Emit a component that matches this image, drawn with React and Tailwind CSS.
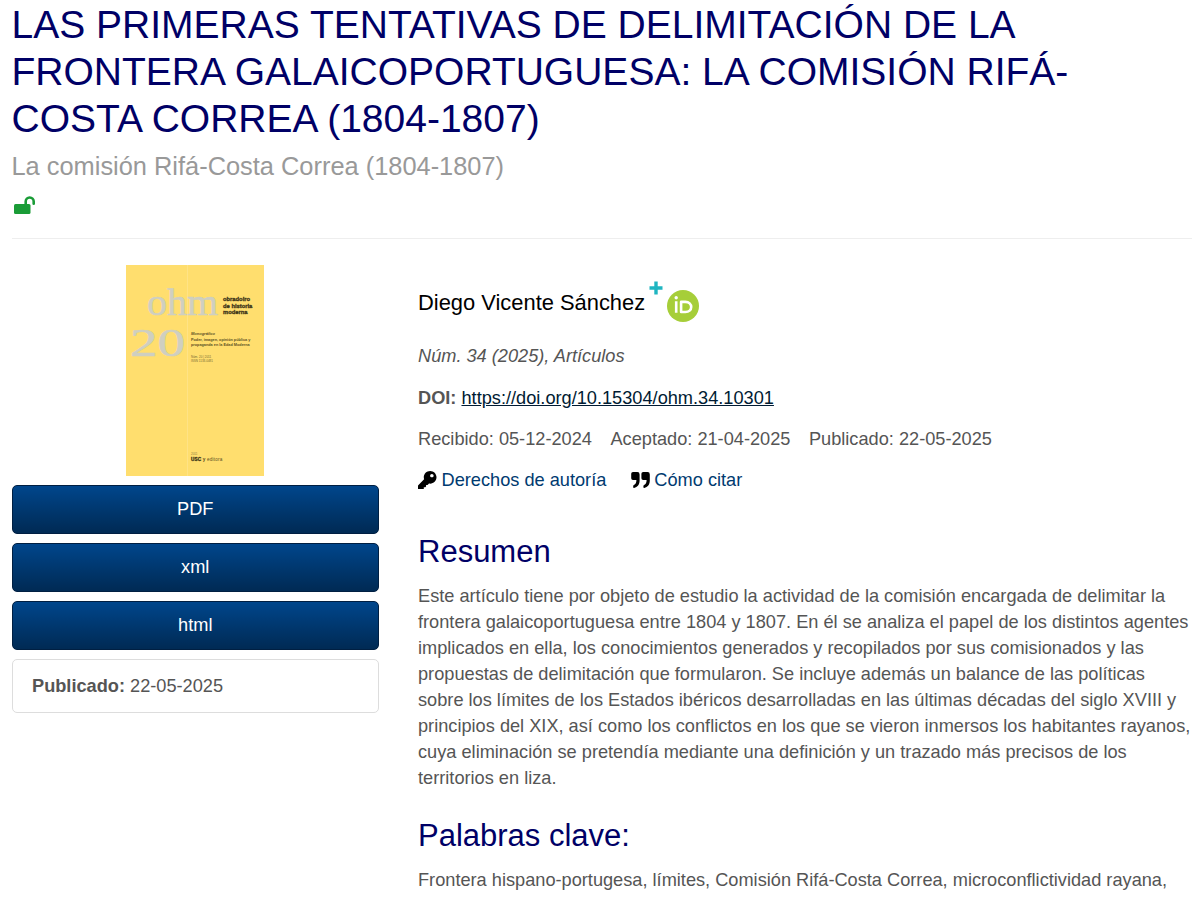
import React from "react";
import { FaKey } from "react-icons/fa";

const galleys = ["PDF", "xml", "html"];

const abstractLines = [
  "Este artículo tiene por objeto de estudio la actividad de la comisión encargada de delimitar la",
  "frontera galaicoportuguesa entre 1804 y 1807. En él se analiza el papel de los distintos agentes",
  "implicados en ella, los conocimientos generados y recopilados por sus comisionados y las",
  "propuestas de delimitación que formularon. Se incluye además un balance de las políticas",
  "sobre los límites de los Estados ibéricos desarrolladas en las últimas décadas del siglo XVIII y",
  "principios del XIX, así como los conflictos en los que se vieron inmersos los habitantes rayanos,",
  "cuya eliminación se pretendía mediante una definición y un trazado más precisos de los",
  "territorios en liza.",
];

function OpenLock() {
  return (
    <svg className="block h-[18px] w-[21px]" viewBox="0 0 21 18" aria-hidden="true">
      <rect x="0" y="8" width="16.5" height="10" rx="1.5" fill="#1a9c37" />
      <path d="M11.7 9V5.5a4 4 0 0 1 8 0V7.8" fill="none" stroke="#1a9c37" strokeWidth="2.6" strokeLinecap="round" />
    </svg>
  );
}

function Quotes() {
  return (
    <svg className="block h-[18px] w-[19px]" viewBox="0 0 19 18" aria-hidden="true">
      <g fill="#000">
        <path d="M2 1H6.4Q8.6 1 8.6 3.4V9.5C8.6 13.5 6.5 16.3 3.1 16.9Q2.2 17 2.2 16.2V14.8Q2.2 14.2 2.9 13.9C4.6 13.2 5.4 11.8 5.4 9H2Q.2 9 .2 7.2V2.8Q.2 1 2 1Z" />
        <path d="M12.2 1H16.6Q18.8 1 18.8 3.4V9.5C18.8 13.5 16.7 16.3 13.3 16.9Q12.4 17 12.4 16.2V14.8Q12.4 14.2 13.1 13.9C14.8 13.2 15.6 11.8 15.6 9H12.2Q10.4 9 10.4 7.2V2.8Q10.4 1 12.2 1Z" />
      </g>
    </svg>
  );
}

function Orcid() {
  return (
    <svg className="block size-8" viewBox="0 0 32 32" aria-label="ORCID">
      <circle cx="16" cy="16" r="16" fill="#a6ce39" />
      <circle cx="9.2" cy="7.7" r="1.7" fill="#fff" />
      <path d="M9.2 11.2V22.8M14.1 11.9V22H18.4C22 22 24.2 19.9 24.2 17S22 11.9 18.4 11.9Z" fill="none" stroke="#fff" strokeWidth="2.6" strokeLinejoin="round" />
    </svg>
  );
}

function Cover() {
  return (
    <div className="relative h-[211px] w-[138px] overflow-hidden bg-[#ffde6e]">
      <div className="absolute left-[61px] top-0 h-full w-px bg-[#ffe386]" />
      <svg className="absolute left-0 top-0 h-[110px] w-[138px]" viewBox="0 0 138 110" aria-hidden="true">
        <g fill="#cfcfc0" stroke="#cfcfc0" strokeWidth="0.6" fontFamily="Liberation Serif, serif">
          <text x="21" y="50" fontSize="37" textLength="71" lengthAdjust="spacingAndGlyphs">ohm</text>
          <text x="4" y="91" fontSize="39" textLength="55" lengthAdjust="spacingAndGlyphs">20</text>
        </g>
      </svg>
      <div className="absolute left-[97px] top-[31px] whitespace-nowrap text-[5.8px] font-bold leading-[6.7px] text-[#3c3418] [-webkit-text-stroke:0.3px_#3c3418]">
        obradoiro<br />de historia<br />moderna
      </div>
      <div className="absolute left-[65px] top-[66px] whitespace-nowrap text-[4px] font-bold italic leading-[5px] text-[#5c5024]">Monográfico</div>
      <div className="absolute left-[65px] top-[73px] whitespace-nowrap text-[3.8px] font-bold leading-[5px] text-[#5c5024]">
        Poder, imagen, opinión pública y<br />propaganda en la Edad Moderna
      </div>
      <div className="absolute left-[65px] top-[90px] whitespace-nowrap text-[3px] leading-[4px] text-[#776a35]">
        Núm. 20 | 2011<br />ISSN 1133-0481
      </div>
      <div className="absolute left-[65px] top-[187px] whitespace-nowrap text-[3px] leading-[4px] text-[#8c7c3e]">2011</div>
      <div className="absolute left-[65px] top-[192px] whitespace-nowrap text-[4.7px] leading-[6px] tracking-[0.15px] text-[#5c5024]">
        <b className="text-[#3c3418] [-webkit-text-stroke:0.3px_#3c3418]">USC</b> <b>y</b> editora
      </div>
    </div>
  );
}

export default function App() {
  return (
    <div className="h-[897px] overflow-hidden bg-white pl-[11.5px] pr-2 font-['Liberation_Sans',Arial,sans-serif] text-[18.2px] leading-[26px] text-[#555]">
      <header className="flex h-[239px] flex-col border-b border-[#eee] pt-px">
        <h1 className="whitespace-nowrap text-[39px] leading-[47px] text-[#000066]">
          <span>LAS PRIMERAS TENTATIVAS DE DELIMITACIÓN DE LA</span><br />
          <span>FRONTERA GALAICOPORTUGUESA: LA COMISIÓN RIFÁ-</span><br />
          <span>COSTA CORREA (1804-1807)</span>
        </h1>
        <p className="mt-[9px] text-[25.4px] leading-[30px] text-[#999]"><span>La comisión Rifá-Costa Correa (1804-1807)</span></p>
        <div className="ml-[2.5px] mt-[15px]"><OpenLock /></div>
      </header>

      <div className="flex gap-[39px]">
        <aside className="flex w-[367.5px] shrink-0 flex-col pt-[26px]">
          <div className="flex pl-[114.5px]"><Cover /></div>
          <div className="mt-[9px] flex flex-col gap-[9px]">
            {galleys.map((g) => (
              <button key={g} className="h-[49px] rounded-[5px] border border-[#001f42] bg-linear-to-b from-[#00468c] to-[#002a54] pb-[2px] text-white">{g}</button>
            ))}
          </div>
          <div className="mt-[9px] flex h-[54px] items-center rounded-[5px] border border-[#ddd] pb-px pl-[19.5px]">
            <span><b>Publicado:</b> 22-05-2025</span>
          </div>
        </aside>

        <main className="min-w-0 flex-1 whitespace-nowrap pt-[49px]">
          <div className="flex h-[36px]">
            <span className="pt-px text-[21.9px] leading-[28px] text-black">Diego Vicente Sánchez</span>
            <svg className="ml-1 -mt-[7px] block size-[14px]" viewBox="0 0 14 14" aria-hidden="true">
              <path d="M7 .5v13M.5 7h13" stroke="#1fb5c1" strokeWidth="3.4" />
            </svg>
            <div className="ml-1 mt-[2px]"><Orcid /></div>
          </div>
          <p className="mt-[19px] italic">Núm. 34 (2025), Artículos</p>
          <p className="mt-[16px]"><b>DOI:</b> <a className="text-[#001b33] underline">https://doi.org/10.15304/ohm.34.10301</a></p>
          <p className="mt-[15px] flex gap-[18.5px]">
            <span>Recibido: 05-12-2024</span><span>Aceptado: 21-04-2025</span><span>Publicado: 22-05-2025</span>
          </p>
          <div className="mt-[15px] flex gap-[24.5px] text-[#003a70]">
            <a className="flex items-center gap-[5px]"><FaKey className="size-[18.5px] text-black" /><span>Derechos de autoría</span></a>
            <a className="flex items-center gap-[4.5px]"><Quotes /><span>Cómo citar</span></a>
          </div>
          <h2 className="mt-[40px] text-[31px] leading-[37px] text-[#000066]"><span>Resumen</span></h2>
          <p className="mt-[13px]">
            {abstractLines.map((line) => (
              <span key={line} className="block">{line}</span>
            ))}
          </p>
          <h2 className="mt-[26px] text-[31px] leading-[37px] text-[#000066]"><span>Palabras clave:</span></h2>
          <p className="mt-[13px]">Frontera hispano-portugesa, límites, Comisión Rifá-Costa Correa, microconflictividad rayana,</p>
        </main>
      </div>
    </div>
  );
}
